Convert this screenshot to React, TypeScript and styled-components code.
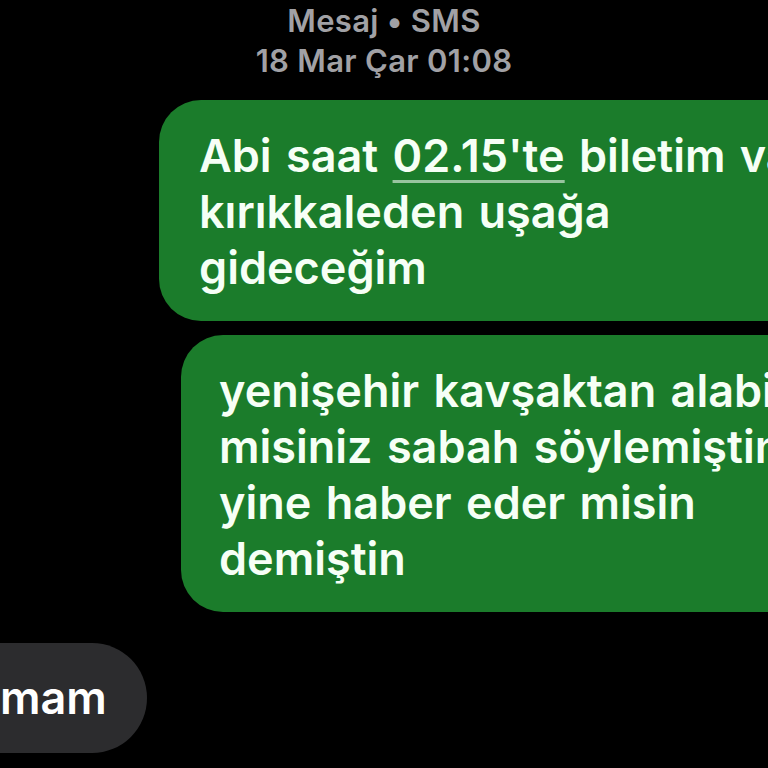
import { FC } from 'react';
import styled, { createGlobalStyle } from 'styled-components';

const GlobalStyle = createGlobalStyle`
  html,
  body {
    margin: 0;
    padding: 0;
    background: #000;
  }

  body {
    width: 768px;
    height: 768px;
    overflow: hidden;
    font-family: Inter, 'Noto Sans', 'Liberation Sans', sans-serif;
    -webkit-font-smoothing: antialiased;
  }
`;

const Thread = styled.main`
  width: 768px;
  height: 768px;
  overflow: hidden;
  display: flex;
  flex-direction: column;
`;

const Stamp = styled.header`
  display: flex;
  flex-direction: column;
  align-items: center;
  padding-top: 1px;
  color: #a1a1a5;
  font-size: 31px;
  font-weight: 600;
  line-height: 40px;
  letter-spacing: 0.3px;
`;

const Stack = styled.section`
  display: flex;
  flex-direction: column;
  gap: 14px;
  margin-top: 19px;
`;

const Outgoing = styled.div<{ $left: number; $padLeft: number }>`
  align-self: flex-start;
  margin-left: ${(p) => p.$left}px;
  min-width: 700px;
  padding: 28px 0 25px ${(p) => p.$padLeft}px;
  background: #1b7c2b;
  border-radius: 42px;
  color: #f6fff6;
  font-size: 45px;
  font-weight: 600;
  line-height: 56px;
  word-spacing: 3px;
  white-space: nowrap;
`;

const Line = styled.div``;

const Link = styled.span`
  text-decoration: underline;
  text-decoration-color: rgba(255, 255, 255, 0.55);
  text-decoration-thickness: 3px;
  text-underline-offset: 8px;
`;

const Incoming = styled.div`
  align-self: flex-start;
  margin-top: 31px;
  margin-left: -60px;
  padding: 27px 40px 27px 60px;
  background: #2c2c2e;
  border-radius: 55px;
  color: #fff;
  font-size: 45px;
  font-weight: 600;
  line-height: 56px;
  white-space: nowrap;
`;

const App: FC = () => (
  <>
    <GlobalStyle />
    <Thread>
      <Stamp>
        <span>Mesaj • SMS</span>
        <span>18 Mar Çar 01:08</span>
      </Stamp>
      <Stack>
        <Outgoing $left={159} $padLeft={40}>
          <Line>
            Abi saat <Link>02.15'te</Link> biletim var
          </Line>
          <Line>kırıkkaleden uşağa</Line>
          <Line>gideceğim</Line>
        </Outgoing>
        <Outgoing $left={181} $padLeft={38}>
          <Line>yenişehir kavşaktan alabilir</Line>
          <Line>misiniz sabah söylemiştin</Line>
          <Line>yine haber eder misin</Line>
          <Line>demiştin</Line>
        </Outgoing>
      </Stack>
      <Incoming>mam</Incoming>
    </Thread>
  </>
);

export default App;
